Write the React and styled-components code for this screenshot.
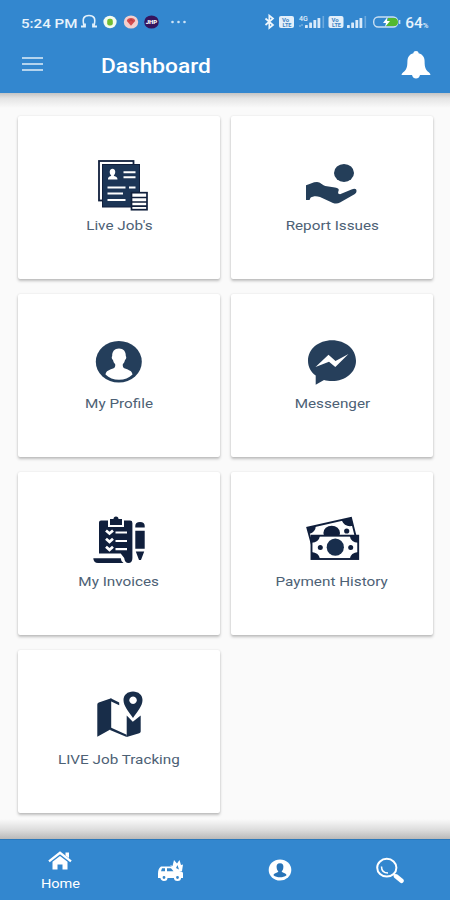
import React from 'react';
import styled, { createGlobalStyle } from 'styled-components';

const dark = '#101f3c';

const cards = [
  { label: "Live Job's", icon: JobsIcon },
  { label: 'Report Issues', icon: HandIcon },
  { label: 'My Profile', icon: ProfileIcon },
  { label: 'Messenger', icon: MessengerIcon },
  { label: 'My Invoices', icon: InvoiceIcon },
  { label: 'Payment History', icon: MoneyIcon },
  { label: 'LIVE Job Tracking', icon: MapIcon },
];

export default function App() {
  return (
    <Screen>
      <GlobalStyle />
      <Header>
        <StatusBar>
          <Clock>5:24 PM</Clock>
          <Notifications />
          <Spacer />
          <SystemIcons />
          <Battery>64<small>%</small></Battery>
        </StatusBar>
        <TitleBar>
          <MenuButton aria-label="Menu"><i /><i /><i /></MenuButton>
          <Title>Dashboard</Title>
          <Spacer />
          <BellIcon />
        </TitleBar>
      </Header>
      <Content>
        {cards.map(({ label, icon: Icon }) => (
          <Card key={label}>
            <Icon />
            <CardLabel>{label}</CardLabel>
          </Card>
        ))}
      </Content>
      <NavBar>
        <NavItem>
          <HomeIcon />
          <NavLabel>Home</NavLabel>
        </NavItem>
        <NavItem><VanIcon /></NavItem>
        <NavItem><UserIcon /></NavItem>
        <NavItem><SearchIcon /></NavItem>
      </NavBar>
    </Screen>
  );
}

function Notifications() {
  return (
    <svg width="110" height="18" viewBox="79 13 110 18">
      <path d="M84 26 C82 18 84 15.5 89 15.5 C94 15.5 96 18 94 26" fill="none" stroke="#e4f1fb" strokeWidth="1.6" />
      <path d="M81 26.5h4v-3M97 26.5h-4v-3" fill="none" stroke="#e4f1fb" strokeWidth="1.8" />
      <ellipse cx="110" cy="22" rx="6.6" ry="6.2" fill="#f4fbef" />
      <rect x="107.2" y="18.8" width="5.6" height="6.6" rx="2.2" fill="#72bd35" />
      <ellipse cx="131" cy="22" rx="7.2" ry="6.6" fill="#f3cfcd" />
      <path d="M126.8 21c0-4 8.4-4 8.4 0L131 25.8z" fill="#d54c4f" />
      <path d="M129 21.5l2-2 2 2" fill="none" stroke="#a2373e" />
      <ellipse cx="151.5" cy="22" rx="7.3" ry="6.6" fill="#35145d" />
      <text x="151.5" y="24.4" textAnchor="middle" fontSize="6" fontWeight="900" fill="#fff">JHP</text>
      <g fill="#cfe4f6">
        <circle cx="172.5" cy="22" r="1.3" />
        <circle cx="178.5" cy="22" r="1.3" />
        <circle cx="184.5" cy="22" r="1.3" />
      </g>
    </svg>
  );
}

function SystemIcons() {
  return (
    <svg width="141" height="18" viewBox="262 13 141 18">
      <path d="M265.5 18.5l7.5 6.5-3.7 3v-12.5l3.7 3-7.5 6.5" fill="none" stroke="#eef6fc" strokeWidth="1.7" />
      {[279, 328.5].map((x) => (
        <g key={x}>
          <rect x={x} y="16" width="15" height="12" rx="2" fill="#e3effa" />
          <text x={x + 6.5} y="21.8" textAnchor="middle" fontSize="6" fontWeight="700" fill="#3c83c3">Vo</text>
          <text x={x + 8} y="27" textAnchor="middle" fontSize="5.5" fontWeight="700" fill="#3c83c3">LTE</text>
        </g>
      ))}
      <text x="299" y="20.8" fontSize="7" fontWeight="500" fill="#e3effa">4G</text>
      <path d="M299 26h2M302 24v2" stroke="#94c1e7" />
      {[305, 347].map((x) => (
        <g key={x} fill="#d9eafa">
          <rect x={x} y="25" width="2.8" height="3" rx=".6" />
          <rect x={x + 4.2} y="22.5" width="2.8" height="5.5" rx=".6" />
          <rect x={x + 8.4} y="20" width="2.8" height="8" rx=".6" />
          <rect x={x + 12.5} y="18" width="2.8" height="10" rx=".6" />
          <rect x={x + 17.5} y="16" width="1.6" height="12" opacity=".35" />
        </g>
      ))}
      <rect x="373.7" y="17" width="24" height="10" rx="4.5" fill="none" stroke="#c9dff2" strokeWidth="1.4" />
      <path d="M388 18h7q3 1 3 4t-3 4h-9z" fill="#53b830" />
      <path d="M399.6 20v4" stroke="#c9dff2" strokeWidth="1.5" />
      <path d="M387.5 17l-4.5 6h3l-1 4 5-6h-3z" fill="#fff" />
    </svg>
  );
}

function BellIcon() {
  return (
    <svg width="32" height="30" viewBox="0 0 32 30" fill="#fff">
      <path d="M16 1c1.6 0 2.5.9 2.6 2.3 4 1 6 4 6 8.2 0 6 1.2 8.5 4.2 10.8 1.5 1.2 1.8 2.7 1.5 2.7H1.7c-.3 0 0-1.5 1.5-2.7 3-2.3 4.2-4.8 4.2-10.8 0-4.2 2-7.2 6-8.2C13.5 1.9 14.4 1 16 1z" />
      <path d="M12 25h8c-.6 2.5-2 3.500-4 3.500s-3.400-1-4-3.500z" />
    </svg>
  );
}

function JobsIcon() {
  return (
    <CardIcon viewBox="0 0 60 54">
      <rect x="10" y="3" width="34.5" height="39.5" fill="#fff" stroke={dark} strokeWidth="1.8" />
      <rect x="13.5" y="6.5" width="37" height="42.5" fill="#1c3556" stroke={dark} />
      <path d="M19 21.5c0-3 2-3 3.300-3.800-2.600-3-1.800-7 1.200-7s3.800 4 1.200 7c1.300.8 3.800.8 3.800 3.800z" fill="#fff" />
      <path d="M34.5 14.2h12M34.5 19.3h12M18.500 29.500h18M40 29.500h6.500M18.500 35.500h15.500M18.500 42h18" stroke="#fff" strokeWidth="2" />
      <rect x="42.5" y="34.7" width="15.5" height="17" fill="#fff" stroke={dark} strokeWidth="1.7" />
      <path d="M43 39.500h15M43 44h15M43 48.200h15" stroke={dark} strokeWidth="1.700" />
    </CardIcon>
  );
}

function HandIcon() {
  return (
    <CardIcon viewBox="0 0 60 54" fill="#243e59">
      <ellipse cx="42" cy="14.900" rx="10" ry="9" />
      <path d="M4 27.300C8 26 11 24 15 24c3.500 0 5 3 8.300 4l9.700 1.500c3 .5 4.500 1.800 3.500 3.500-.5 1-.5 2 0 2.800l1.500.4 11.500-4.700c3.500-1.300 5-.5 5 1.600 0 1.500-.8 2.500-2 3.200l-14.500 8.200c-2 1.200-4.500 1.500-7 .4L18 39c-4-1.300-7-.8-9.500.7L7.500 42H4z" />
    </CardIcon>
  );
}

function ProfileIcon() {
  return (
    <CardIcon viewBox="0 0 60 54">
      <ellipse cx="29.8" cy="25.8" rx="23" ry="20.8" fill="#243e5b" />
      <path d="M30 12.500c4.500 0 7 3 6.800 7.600 1 1 .3 3.500-.8 4-.4 1.800-1.100 3.200-2.200 4.200-.3 2.500.4 3.500 2.200 4.300 4 1.700 7 2.200 7.500 5.900C40 42 35.500 43.800 30 43.800s-10-1.800-13.500-5.300c.5-3.700 3.500-4.200 7.500-5.900 1.800-.8 2.500-1.800 2.200-4.300-1.100-1-1.800-2.400-2.200-4.200-1.100-.5-1.800-3-.8-4-.2-4.600 2.300-7.600 6.800-7.600z" fill="#fff" />
    </CardIcon>
  );
}

function MessengerIcon() {
  return (
    <CardIcon viewBox="0 0 60 54">
      <path d="M30 4.200c13.500 0 24 8.800 24 20.500S43.500 45 30 45c-3 0-5.500-.3-8-1l-8.300 4.800V39.500C9 36 6 31 6 24.700 6 13 16.500 4.200 30 4.200z" fill="#263f5b" />
      <path d="M13.500 31l13-12.300 7 6.200L46.500 18 33.300 31 27 25.800z" fill="#fff" />
    </CardIcon>
  );
}

function InvoiceIcon() {
  return (
    <CardIcon viewBox="0 0 60 54" fill={dark}>
      <path d="M12 6.500h7v6.500h16v-6.500h6q2.400 0 2.400 2.400V44q0 5-4 5-3.600 0-4.200-5l-3.500-4.500H10V8.500q0-2 2-2z" />
      <path d="M21 5h3.500q0-2.500 2.500-2.500T29.500 5H33v6H21z" />
      <path d="M4.300 44.300h27.500q0 3 2.700 4.700H9q-4.500 0-4.700-4.700z" />
      <path d="M17 16.500l3.500 3 3.500-3M17 24.800l3.500 3 3.500-3M17 32.800l3.500 3 3.500-3" fill="none" stroke="#fff" strokeWidth="2.800" />
      <path d="M26.500 18.500h11.500M26.500 27h11.500M26.500 35.200h11.500" stroke="#fff" strokeWidth="2.200" />
      <path d="M46.300 13.500v-1.700q0-3.800 4.700-3.800t4.700 3.800v1.700zM46.300 16.800h9.400v18h-9.400zM46.800 37.500h8.400L52 46h-2z" />
    </CardIcon>
  );
}

function MoneyIcon() {
  return (
    <CardIcon viewBox="0 0 60 54" fill={dark}>
      <path d="M5.300 13.800L49 3.800l4.500 18L10 31z" fill="#fff" stroke={dark} strokeWidth="1.900" />
      <path d="M5.300 13.800l8.500-2q0 6-6.500 8.300zM39.500 6L49 3.800l2 8q-8 2-11.500-5.800z" />
      <ellipse cx="29.700" cy="19" rx="8.300" ry="7.300" />
      <circle cx="44.700" cy="17" r="2.600" />
      <rect x="9.500" y="21.700" width="46.700" height="23.300" fill="#fff" stroke={dark} strokeWidth="1.900" />
      <path d="M9.500 21.700h8.500q-1 6.500-8.500 7zM56.200 21.700h-8.500q1 6.500 8.500 7zM9.500 45h8.500q-1-6.500-8.500-7zM56.200 45h-8.500q1-6.500 8.500-7z" />
      <ellipse cx="33.300" cy="33.200" rx="8.600" ry="8.600" fill="#182e4d" />
      <circle cx="18.300" cy="33.500" r="2.500" />
      <circle cx="48.700" cy="33.500" r="2.500" />
    </CardIcon>
  );
}

function MapIcon() {
  return (
    <CardIcon viewBox="0 0 60 54" fill="#182d49">
      <path d="M8.300 12.500q0-1.500 1.500-2L22.200 6.300v30.800L8.300 44.700z" />
      <path d="M21.700 6.300l8.500 4.200v2.800l-8.500-4zM21.700 35.500l16 7.200v2.300L21 38z" />
      <path d="M37.700 23.500l6.100 6.200 7.900-6.200v16q0 1.300-1.500 1.800L37.700 45z" />
      <path fillRule="evenodd" d="M44-.5c5.500 0 9.500 3.500 9.500 8.500 0 6-5 11.500-9.500 18-4.500-6.500-9.500-12-9.500-18 0-5 4-8.500 9.500-8.500zm0 5a3.800 3.700 0 1 0 .1 0z" />
    </CardIcon>
  );
}

function HomeIcon() {
  return (
    <svg width="26" height="20" viewBox="0 0 26 20">
      <path d="M2 10.300L13 1.800l11 8.500" fill="none" stroke="#fff" strokeWidth="2.300" />
      <path d="M18.500 1.500H22V7l-3.500-2.500z" fill="#fff" />
      <path d="M13 5l7.500 5.700V18.500h-5v-5h-5v5h-5v-7.800z" fill="#fff" />
    </svg>
  );
}

function VanIcon() {
  return (
    <svg width="27" height="23" viewBox="0 0 27 23">
      <path d="M13 6l2.500 1L17 1l3 3.500L22.500 1l1.500 5 2-.5-1 6.500h-6z" fill="#fff" />
      <path d="M4 7.500h11l5 4 4.500 1q1.500.5 1.500 2V19H1v-4.500q0-5 3-7z" fill="#fff" />
      <path d="M5 9.300h3v3H4zM10 9.300h4l2.500 3H10zM19 9l1.500-3 1.500 4.500" fill="#3586ca" />
      <circle cx="7" cy="18.500" r="2.500" fill="#3586ca" stroke="#fff" strokeWidth="2.200" />
      <circle cx="20.500" cy="18.500" r="2.500" fill="#3586ca" stroke="#fff" strokeWidth="2.200" />
    </svg>
  );
}

function UserIcon() {
  return (
    <svg width="24" height="22" viewBox="0 0 24 22">
      <ellipse cx="12" cy="11" rx="11.300" ry="10.500" fill="#fff" />
      <path d="M12 4.300c2.800 0 3.800 2 3.300 4.700-.3 1.700-.8 2.700-1.600 3.300 0 1.800 4.300 1.200 4.800 4-1.800 1.400-4 2-6.500 2s-4.700-.6-6.500-2c.5-2.800 4.800-2.200 4.800-4-.8-.6-1.300-1.600-1.600-3.300-.5-2.700.5-4.700 3.300-4.700z" fill="#2874b8" />
    </svg>
  );
}

function SearchIcon() {
  return (
    <svg width="28" height="27" viewBox="1 0 28 27" fill="none" stroke="#fff">
      <ellipse cx="11.800" cy="10.700" rx="9.600" ry="8.900" strokeWidth="2" />
      <path d="M6.500 9.500c0 4 2.500 6.500 6.500 6.500" strokeWidth="1.500" />
      <path d="M18.500 17l2 2" strokeWidth="2" />
      <path d="M21 19.300l5.500 4.500" strokeWidth="4.500" strokeLinecap="round" />
    </svg>
  );
}

const GlobalStyle = createGlobalStyle`
  * { box-sizing: border-box; }

  body {
    margin: 0;
    font-family: Roboto, sans-serif;
    background: #fafafa;
  }
`;

const Screen = styled.div`
  display: flex;
  flex-direction: column;
  width: 450px;
  height: 900px;
  overflow: hidden;
  background: #fafafa;
`;

const Header = styled.header`
  height: 93px;
  flex: none;
  background: #3387cf;
  color: #fff;
`;

const StatusBar = styled.div`
  display: flex;
  align-items: center;
  height: 44px;
  padding: 0 21px;
`;

const Clock = styled.span`
  width: 58px;
  padding-top: 1px;
  font-size: 13.5px;
  font-weight: 500;
  white-space: nowrap;
  color: #e8f3fc;
  transform: scaleX(1.12);
  transform-origin: left;
`;

const Battery = styled.span`
  width: 26px;
  padding: 1px 0 0 2px;
  font-size: 14px;
  font-weight: 500;
  white-space: nowrap;
  color: #e8f3fc;
  transform: scaleX(1.1);
  transform-origin: left;

  small {
    font-size: 7px;
  }
`;

const Spacer = styled.div`
  flex: 1;
`;

const TitleBar = styled.div`
  display: flex;
  align-items: center;
  height: 42px;
  padding: 0 18px 0 22px;
`;

const MenuButton = styled.button`
  display: flex;
  flex-direction: column;
  gap: 4px;
  width: 21px;
  margin: 0 58px 2px 0;
  padding: 0;
  border: 0;
  background: none;

  i {
    width: 21px;
    height: 2px;
    background: #b4d4ee;
  }
`;

const Title = styled.h1`
  margin: 1px 0 0;
  font-size: 20px;
  font-weight: 500;
  transform: scaleX(1.135);
  transform-origin: left;
`;

const Content = styled.main`
  flex: 1;
  display: grid;
  grid-template-columns: 202px 202px;
  grid-auto-rows: 163px;
  gap: 15px 11px;
  padding: 23px 17px 0 18px;
  background:
    linear-gradient(to bottom, #c4c4c4, #e4e4e4 35%, #fafafa) top / 100% 15px no-repeat,
    linear-gradient(to top, #b9b9b9, #dcdcdc 45%, #fafafa) bottom / 100% 20px no-repeat,
    #fafafa;
`;

const Card = styled.section`
  display: flex;
  flex-direction: column;
  align-items: center;
  padding-top: 42px;
  border-radius: 2px;
  background: #fff;
  box-shadow: 0 2px 3px rgba(0, 0, 0, 0.24), 0 0 2px rgba(0, 0, 0, 0.1);
`;

const CardIcon = styled.svg`
  width: 60px;
  height: 54px;
  overflow: visible;
`;

const CardLabel = styled.span`
  margin-top: 4px;
  font-size: 13.5px;
  line-height: 18px;
  white-space: nowrap;
  color: #4d6175;
  transform: scaleX(1.13);
`;

const NavBar = styled.nav`
  display: grid;
  grid-template-columns: repeat(4, 1fr);
  flex: none;
  height: 61px;
  padding: 0 5px;
  border-top: 1px solid #2a78bb;
  background: #3387cf;
`;

const NavItem = styled.div`
  display: flex;
  flex-direction: column;
  align-items: center;
  justify-content: center;
  color: #fff;
`;

const NavLabel = styled.span`
  margin: 4px 0 -3px;
  font-size: 13px;
  line-height: 18px;
  transform: scaleX(1.12);
`;
